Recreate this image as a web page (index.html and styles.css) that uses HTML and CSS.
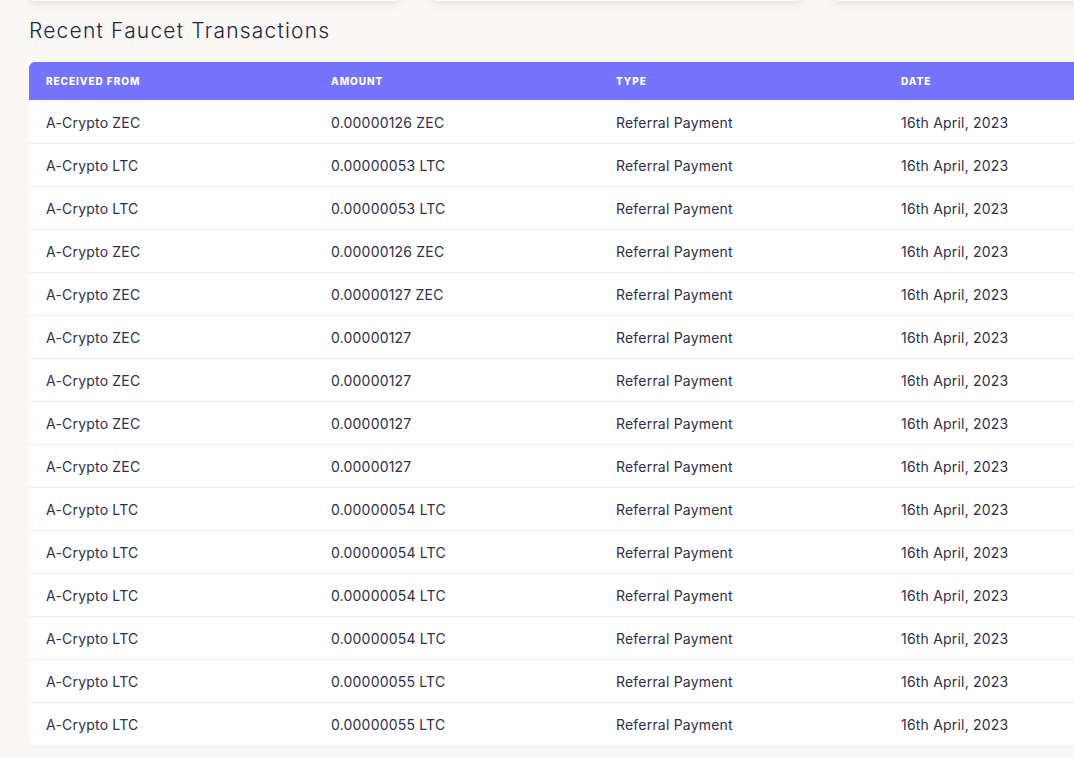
FILE: index.html
```html
<!DOCTYPE html>
<html>
<head>
<meta charset="utf-8">
<link rel="stylesheet" href="styles.css">
</head>
<body>
<div class="page">
  <div class="cards">
    <div class="card"></div>
    <div class="card"></div>
    <div class="card"></div>
  </div>
  <h2 class="title">Recent Faucet Transactions</h2>
  <div class="table-wrap">
    <table class="tx">
      <thead>
        <tr><th>Received From</th><th>Amount</th><th>Type</th><th>Date</th></tr>
      </thead>
      <tbody>
        <tr><td>A-Crypto ZEC</td><td>0.00000126 ZEC</td><td>Referral Payment</td><td>16th April, 2023</td></tr>
        <tr><td>A-Crypto LTC</td><td>0.00000053 LTC</td><td>Referral Payment</td><td>16th April, 2023</td></tr>
        <tr><td>A-Crypto LTC</td><td>0.00000053 LTC</td><td>Referral Payment</td><td>16th April, 2023</td></tr>
        <tr><td>A-Crypto ZEC</td><td>0.00000126 ZEC</td><td>Referral Payment</td><td>16th April, 2023</td></tr>
        <tr><td>A-Crypto ZEC</td><td>0.00000127 ZEC</td><td>Referral Payment</td><td>16th April, 2023</td></tr>
        <tr><td>A-Crypto ZEC</td><td>0.00000127</td><td>Referral Payment</td><td>16th April, 2023</td></tr>
        <tr><td>A-Crypto ZEC</td><td>0.00000127</td><td>Referral Payment</td><td>16th April, 2023</td></tr>
        <tr><td>A-Crypto ZEC</td><td>0.00000127</td><td>Referral Payment</td><td>16th April, 2023</td></tr>
        <tr><td>A-Crypto ZEC</td><td>0.00000127</td><td>Referral Payment</td><td>16th April, 2023</td></tr>
        <tr><td>A-Crypto LTC</td><td>0.00000054 LTC</td><td>Referral Payment</td><td>16th April, 2023</td></tr>
        <tr><td>A-Crypto LTC</td><td>0.00000054 LTC</td><td>Referral Payment</td><td>16th April, 2023</td></tr>
        <tr><td>A-Crypto LTC</td><td>0.00000054 LTC</td><td>Referral Payment</td><td>16th April, 2023</td></tr>
        <tr><td>A-Crypto LTC</td><td>0.00000054 LTC</td><td>Referral Payment</td><td>16th April, 2023</td></tr>
        <tr><td>A-Crypto LTC</td><td>0.00000055 LTC</td><td>Referral Payment</td><td>16th April, 2023</td></tr>
        <tr><td>A-Crypto LTC</td><td>0.00000055 LTC</td><td>Referral Payment</td><td>16th April, 2023</td></tr>
      </tbody>
    </table>
  </div>
</div>
</body>
</html>
```
FILE: styles.css
```css
html, body {
  margin: 0;
  padding: 0;
  background: #f9f8f5;
  overflow: hidden;
}
body {
  font-family: Inter, "Noto Sans", sans-serif;
  color: #2f2f47;
  width: 1074px;
  height: 758px;
}
.page {
  padding: 0 0 0 29px;
  width: 1175px;
}
.cards {
  display: flex;
  gap: 31px;
  margin-top: -100px;
  height: 101px;
}
.card {
  flex: 1;
  background: #fbfaf8;
  border-radius: 6px;
  box-shadow: 0 3px 8px rgba(60, 50, 30, 0.10);
}
.title {
  margin: 17px 0 0;
  font-size: 21px;
  line-height: 26px;
  font-weight: 300;
  letter-spacing: 1.2px;
  color: #25253f;
}
.table-wrap {
  margin-top: 18px;
  background: #fff;
  border-radius: 6px;
  overflow: hidden;
  width: 1140px;
}
.tx {
  width: 1140px;
  border-collapse: collapse;
  table-layout: fixed;
}
.tx th {
  background: #7474ff;
  color: #fff;
  font-size: 10px;
  font-weight: 800;
  letter-spacing: 0.95px;
  text-transform: uppercase;
  text-align: left;
  height: 38px;
  padding: 0 0 0 17px;
  width: 268px;
}
.tx td {
  font-size: 14px;
  letter-spacing: 0.2px;
  color: #2f2f47;
  height: 41px;
  padding: 1px 0 0 17px;
  border-top: 1px solid #ececee;
}
.tx tbody tr:first-child td {
  border-top: none;
  height: 42px;
}
```
